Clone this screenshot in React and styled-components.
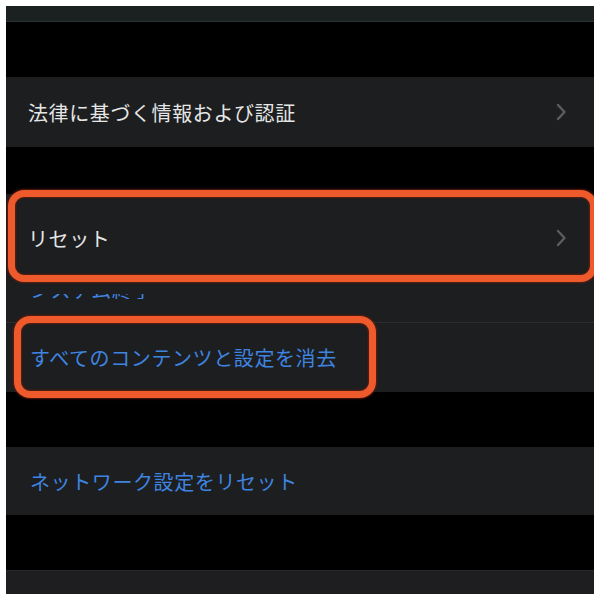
import React from "react";
import styled, { createGlobalStyle } from "styled-components";

const GlobalStyle = createGlobalStyle`
  html, body {
    margin: 0;
    padding: 0;
    background: #ffffff;
  }
  body {
    font-family: "Noto Sans CJK JP", "Noto Sans", sans-serif;
  }
`;

const Frame = styled.div`
  margin: 6px;
  width: 588px;
  height: 588px;
  background: #000;
  overflow: hidden;
  display: flex;
  flex-direction: column;
`;

const TopBand = styled.div`
  height: 15px;
  flex-shrink: 0;
  background: #1b2120;
  border-bottom: 1px solid #2c3231;
`;

const Gap = styled.div`
  height: ${(p) => p.$h}px;
  flex-shrink: 0;
`;

const Row = styled.div`
  position: relative;
  height: ${(p) => p.$h}px;
  flex-shrink: 0;
  display: flex;
  align-items: center;
  justify-content: space-between;
  padding: 0 27px 0 ${(p) => p.$pl || 22}px;
  box-sizing: border-box;
  background: #1c1e1f;
`;

const Label = styled.span`
  font-size: 20px;
  letter-spacing: 0.6px;
  color: ${(p) => (p.$blue ? "#3f84e0" : "#e6e6e6")};
`;

const Separator = styled.div`
  height: 1px;
  flex-shrink: 0;
  background: #2b2c2e;
`;

/* row partly covered by the pasted reset row: only the glyph bottoms show */
const ClippedText = styled.div`
  align-self: flex-start;
  margin-top: 12px;
  height: 5px;
  overflow: hidden;
  span {
    display: block;
    margin-top: -14px;
    line-height: 20px;
  }
`;

const BottomBand = styled.div`
  flex: 1;
  background: #1e1e20;
  border-top: 1px solid #2a2a2c;
`;

const Highlight = styled.div`
  position: absolute;
  top: ${(p) => p.$top}px;
  bottom: ${(p) => p.$bottom}px;
  left: ${(p) => p.$left}px;
  width: ${(p) => p.$w}px;
  border: 7px solid #ef5a2c;
  border-radius: 16px;
  box-shadow: 0 0 2px 1px rgba(110, 30, 15, 0.8),
    inset 0 0 2px 1px rgba(110, 30, 15, 0.8);
  pointer-events: none;
  z-index: 2;
`;

const Chevron = () => (
  <svg width="12" height="18" viewBox="0 0 12 18">
    <path
      d="M3 2 L9.5 9 L3 16"
      fill="none"
      stroke="#5c5d60"
      strokeWidth="2.4"
      strokeLinecap="round"
      strokeLinejoin="round"
    />
  </svg>
);

export default function App() {
  return (
    <>
      <GlobalStyle />
      <Frame>
        <TopBand />
        <Gap $h={55} />
        <Row $h={70}>
          <Label>法律に基づく情報および認証</Label>
          <Chevron />
        </Row>
        <Gap $h={47} />
        <Row $h={88}>
          <Label>リセット</Label>
          <Chevron />
          <Highlight $top={-4} $bottom={0} $left={2} $w={575} />
        </Row>
        <Row $h={40} $pl={24}>
          <ClippedText>
            <Label $blue>システム終了</Label>
          </ClippedText>
        </Row>
        <Separator />
        <Row $h={69} $pl={24}>
          <Label $blue>すべてのコンテンツと設定を消去</Label>
          <Highlight $top={-7} $bottom={-6} $left={8} $w={348} />
        </Row>
        <Gap $h={55} />
        <Row $h={68} $pl={24}>
          <Label $blue>ネットワーク設定をリセット</Label>
        </Row>
        <Gap $h={55} />
        <BottomBand />
      </Frame>
    </>
  );
}
